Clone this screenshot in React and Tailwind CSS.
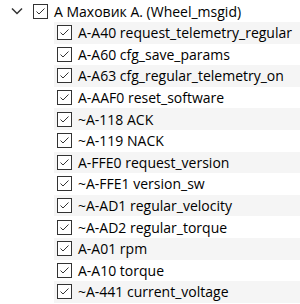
import React from "react";

const items = [
  "A-A40 request_telemetry_regular",
  "A-A60 cfg_save_params",
  "A-A63 cfg_regular_telemetry_on",
  "A-AAF0 reset_software",
  "~A-118 ACK",
  "~A-119 NACK",
  "A-FFE0 request_version",
  "~A-FFE1 version_sw",
  "~A-AD1 regular_velocity",
  "~A-AD2 regular_torque",
  "A-A01 rpm",
  "A-A10 torque",
  "~A-441 current_voltage",
];

function Check() {
  return (
    <div className="w-[15px] h-[15px] shrink-0 border border-[#333333] bg-white flex items-center justify-center">
      <svg width="13" height="13" viewBox="0 0 13 13">
        <path d="M2.5 6.5 L5 9 L10.5 3.5" fill="none" stroke="#333333" strokeWidth="1" />
      </svg>
    </div>
  );
}

export default function App() {
  return (
    <div
      className="w-[300px] h-[304px] bg-white overflow-hidden text-[14px] text-black"
      style={{ fontFamily: '"Open Sans", "Noto Sans", sans-serif' }}
    >
      <div className="h-[22px] flex items-center">
        <div className="w-[33px] flex justify-center">
          <svg width="12" height="8" viewBox="0 0 12 8">
            <path d="M1 1.5 L6 6.5 L11 1.5" fill="none" stroke="#333333" strokeWidth="1.5" />
          </svg>
        </div>
        <Check />
        <span className="ml-[6px] whitespace-nowrap">А Маховик А. (Wheel_msgid)</span>
      </div>
      {items.map((t, i) => (
        <div
          key={i}
          className={`ml-[54px] h-[21.6px] pl-[3px] flex items-center ${i % 2 === 0 ? "bg-[#f5f5f5]" : "bg-white"}`}
        >
          <Check />
          <span className="ml-[6px] whitespace-nowrap">{t}</span>
        </div>
      ))}
    </div>
  );
}
